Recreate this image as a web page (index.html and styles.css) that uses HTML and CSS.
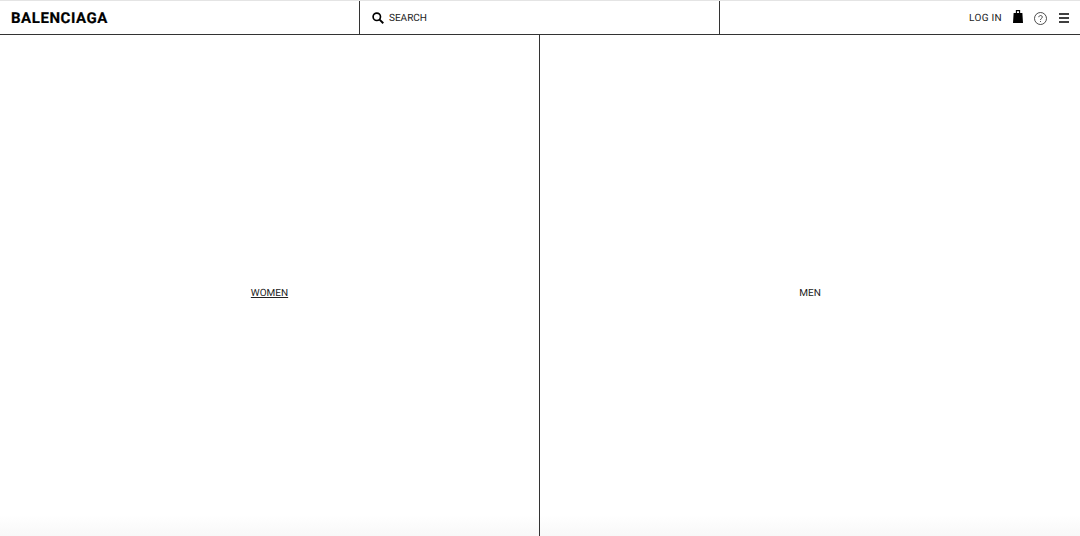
FILE: index.html
```html
<!DOCTYPE html>
<html lang="en">
<head>
    <meta charset="UTF-8">
    <meta name="viewport" content="width=device-width, initial-scale=1.0">
    <title>Balenciaga</title>
    <link rel="stylesheet" href="styles.css">
</head>
<body>
    <!-- Header -->
    <header class="site-header">
        <div class="header-left">
            <a class="logo">BALENCIAGA</a>
        </div>
        <div class="header-search">
            <svg class="search-icon" width="12" height="12" viewBox="0 0 13 13">
                <circle cx="5.2" cy="5.2" r="4" fill="none" stroke="#000" stroke-width="1.8"/>
                <path d="M8.2 8.2L12.2 12.2" stroke="#000" stroke-width="2.1" fill="none"/>
            </svg>
            <span class="search-label">SEARCH</span>
        </div>
        <div class="header-right">
            <a class="login">LOG IN</a>
            <svg class="bag-icon" width="10" height="13" viewBox="0 0 10 13">
                <path d="M0.6 3H9.4L10 13H0Z" fill="#000"/>
                <path d="M3.4 3.5V0.6H6.6V3.5" fill="none" stroke="#000" stroke-width="1.1"/>
            </svg>
            <svg class="help-icon" width="13" height="13" viewBox="0 0 13 13">
                <circle cx="6.5" cy="6.5" r="6" fill="none" stroke="#222" stroke-width="0.8"/>
                <path d="M4.8 5.2C4.8 3 8.3 3 8.3 5.1C8.3 6.5 6.5 6.4 6.5 8" fill="none" stroke="#222" stroke-width="0.8"/>
                <circle cx="6.5" cy="9.6" r="0.5" fill="#222"/>
            </svg>
            <svg class="menu-icon" width="10" height="10" viewBox="0 0 10 10">
                <path d="M0 1H10M0 5H10M0 9H10" stroke="#000" stroke-width="1.6" fill="none"/>
            </svg>
        </div>
    </header>

    <!-- Women / Men split -->
    <main class="split">
        <div class="split-side split-women">
            <a class="split-link active">WOMEN</a>
        </div>
        <div class="split-side">
            <a class="split-link">MEN</a>
        </div>
    </main>
</body>
</html>
```

FILE: styles.css
```css
/* CSS Styles */
html, body {
    height: 100%;
}

body {
    margin: 0;
    padding: 0;
    height: 536px;
    overflow: hidden;
    display: flex;
    flex-direction: column;
    font-family: Roboto, "Liberation Sans", Arial, sans-serif;
    text-rendering: geometricPrecision;
    color: #000;
    background: linear-gradient(to bottom, #fff 0, #fff 515px, #f8f8f8 536px);
}

.site-header {
    display: grid;
    grid-template-columns: 360px 360px 1fr;
    height: 33px;
    flex-shrink: 0;
    border-top: 1px solid #e4e4e4;
    border-bottom: 1px solid #333;
    background: #fff;
}

.header-left {
    display: flex;
    align-items: center;
    padding-left: 11px;
    border-right: 1px solid #333;
}

.logo {
    font-size: 15px;
    font-weight: 700;
    letter-spacing: 0.55px;
    -webkit-text-stroke: 0.2px #000;
    color: #000;
}

.header-search {
    display: flex;
    align-items: center;
    padding-left: 12px;
    border-right: 1px solid #333;
}

.search-label {
    margin-left: 5px;
    margin-top: 1px;
    font-size: 10px;
    color: #222;
}

.header-right {
    display: flex;
    align-items: center;
    justify-content: flex-end;
    padding-right: 11px;
}

.login {
    margin-top: 1px;
    font-size: 10px;
    letter-spacing: 0.3px;
    color: #222;
}

.bag-icon {
    margin-left: 11px;
    margin-top: -2px;
}

.help-icon {
    margin-left: 11px;
    margin-top: 1px;
}

.menu-icon {
    margin-left: 12px;
    margin-top: 1px;
}

.split {
    display: flex;
    flex: 1;
}

.split-side {
    flex: 1;
    display: flex;
    justify-content: center;
    padding-top: 252px;
}

.split-women {
    flex: 0 0 539px;
    border-right: 1px solid #333;
}

.split-link {
    font-size: 10px;
    line-height: 13px;
    height: 13px;
    color: #222;
}

.active {
    text-decoration: underline;
}
```
